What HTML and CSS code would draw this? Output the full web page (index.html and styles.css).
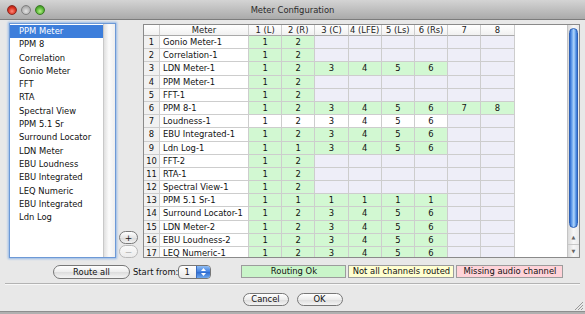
FILE: index.html
```html
<!DOCTYPE html>
<html lang="en">
<head>
    <meta charset="UTF-8">
    <meta name="viewport" content="width=device-width, initial-scale=1.0">
    <title>Meter Configuration</title>
    <link rel="stylesheet" href="styles.css">
</head>
<body>

<div class="window">
    <div class="titlebar">
        <div class="lights">
            <span class="light red"></span>
            <span class="light grey"></span>
            <span class="light green"></span>
        </div>
        <div class="title">Meter Configuration</div>
        <div></div>
    </div>

    <div class="main">
        <div class="list">
            <ul class="items">
                <li class="selected">PPM Meter</li>
                <li>PPM 8</li>
                <li>Correlation</li>
                <li>Gonio Meter</li>
                <li>FFT</li>
                <li>RTA</li>
                <li>Spectral View</li>
                <li>PPM 5.1 Sr</li>
                <li>Surround Locator</li>
                <li>LDN Meter</li>
                <li>EBU Loudness</li>
                <li>EBU Integrated</li>
                <li>LEQ Numeric</li>
                <li>EBU Integrated</li>
                <li>Ldn Log</li>
            </ul>
            <div class="list-track"></div>
        </div>

        <div class="addremove">
            <button class="round">+</button>
            <button class="round" disabled>&minus;</button>
        </div>

        <div class="routing">
            <div class="grid-wrap">
                <div class="row head">
                    <div></div>
                    <div>Meter</div>
                    <div>1 (L)</div>
                    <div>2 (R)</div>
                    <div>3 (C)</div>
                    <div>4 (LFE)</div>
                    <div>5 (Ls)</div>
                    <div>6 (Rs)</div>
                    <div>7</div>
                    <div>8</div>
                </div>
                <div id="rows"></div>
            </div>
            <div class="vscroll">
                <div class="thumb"></div>
                <div class="arrows">
                    <span>&#9650;</span>
                    <span>&#9660;</span>
                </div>
            </div>
        </div>
    </div>

    <div class="controls">
        <button class="pill route">Route all</button>
        <span class="start-label">Start from:</span>
        <div class="popup">
            <span class="value">1</span>
            <span class="popup-arrows">
                <svg width="13" height="12" viewBox="0 0 13 12">
                    <polygon points="4,5 9,5 6.5,2" fill="#fff"/>
                    <polygon points="4,7 9,7 6.5,10" fill="#fff"/>
                </svg>
            </span>
        </div>
        <div class="status">
            <div class="ok">Routing Ok</div>
            <div class="partial">Not all channels routed</div>
            <div class="missing">Missing audio channel</div>
        </div>
    </div>

    <div class="separator"></div>

    <div class="buttons">
        <button class="pill action">Cancel</button>
        <button class="pill action">OK</button>
    </div>

    <svg class="grip" width="9" height="9" viewBox="0 0 9 9">
        <line x1="1" y1="9" x2="9" y2="1" stroke="#999"/>
        <line x1="4" y1="9" x2="9" y2="4" stroke="#999"/>
        <line x1="7" y1="9" x2="9" y2="7" stroke="#999"/>
    </svg>
</div>

<script>
    const meters = [
        ["Gonio Meter-1", [1, 2]],
        ["Correlation-1", [1, 2]],
        ["LDN Meter-1", [1, 2, 3, 4, 5, 6]],
        ["PPM Meter-1", [1, 2]],
        ["FFT-1", [1, 2]],
        ["PPM 8-1", [1, 2, 3, 4, 5, 6, 7, 8]],
        ["Loudness-1", [1, 2, 3, 4, 5, 6], true],
        ["EBU Integrated-1", [1, 2, 3, 4, 5, 6]],
        ["Ldn Log-1", [1, 1, 3, 4, 5, 6]],
        ["FFT-2", [1, 2]],
        ["RTA-1", [1, 2]],
        ["Spectral View-1", [1, 2]],
        ["PPM 5.1 Sr-1", [1, 1, 1, 1, 1, 1]],
        ["Surround Locator-1", [1, 2, 3, 4, 5, 6]],
        ["LDN Meter-2", [1, 2, 3, 4, 5, 6]],
        ["EBU Loudness-2", [1, 2, 3, 4, 5, 6]],
        ["LEQ Numeric-1", [1, 2, 3, 4, 5, 6]]
    ];

    let rows = document.getElementById("rows");

    meters.forEach(function (meter, i) {
        let row = document.createElement("div");
        row.className = "row";

        let num = document.createElement("div");
        num.className = "num";
        num.innerText = i + 1;
        row.appendChild(num);

        let name = document.createElement("div");
        name.className = "name";
        name.innerText = meter[0];
        row.appendChild(name);

        for (let c = 0; c < 8; c++) {
            let cell = document.createElement("div");
            let value = meter[1][c];
            if (value) {
                cell.className = meter[2] ? "plain" : "on";
                cell.innerText = value;
            } else {
                cell.className = "off";
            }
            row.appendChild(cell);
        }
        rows.appendChild(row);
    });
</script>

</body>
</html>
```

FILE: styles.css
```css
body {
    margin: 0;
    width: 585px;
    height: 314px;
    overflow: hidden;
    background: #b0b0b0;
    font-family: "DejaVu Sans", Verdana, sans-serif;
    font-size: 8.4px;
    color: #111;
}
.window {
    position: relative;
    height: 311px;
    background: #e8e8e8;
    border-bottom: 1px solid #8e8e8e;
}
.titlebar {
    display: grid;
    grid-template-columns: 1fr auto 1fr;
    align-items: center;
    height: 19px;
    background: linear-gradient(#d4d4d4, #aaaaaa);
    border-bottom: 1px solid #7c7c7c;
}
.lights {
    display: flex;
    gap: 4px;
    padding-left: 7px;
}
.light {
    width: 10px;
    height: 10px;
    border-radius: 50%;
    box-sizing: border-box;
}
.red {
    background: radial-gradient(circle at 50% 65%, #ff8a7a, #d8301f 55%, #9a1b10);
    border: 1px solid #8a2a20;
}
.grey {
    background: radial-gradient(circle at 50% 65%, #e4e4e4, #b8b8b8 55%, #8e8e8e);
    border: 1px solid #808080;
}
.green {
    background: radial-gradient(circle at 50% 65%, #b6f08a, #58b636 55%, #2f7a18);
    border: 1px solid #3b7a26;
}
.title {
    color: #2a2a2a;
}

.main {
    display: flex;
    align-items: flex-start;
    height: 235px;
    padding: 3px 0 0 9px;
}
.list {
    display: flex;
    width: 107px;
    height: 235px;
    box-sizing: border-box;
    background: #fff;
    border: 1px solid #6d99d6;
    box-shadow: 0 0 2px 1px #94b9e8;
}
.items {
    flex: 1;
    list-style: none;
    margin: 0;
    padding: 1px 0 0;
}
.items li {
    height: 13.3px;
    line-height: 13.3px;
    padding-left: 9px;
    white-space: nowrap;
}
.items li.selected {
    background: #3d7edb;
    color: #fff;
}
.list-track {
    width: 11px;
    background: linear-gradient(to right, #e0e0e0, #fbfbfb 45%, #eeeeee);
    border-left: 1px solid #c9c9c9;
}

.addremove {
    display: flex;
    flex-direction: column;
    justify-content: flex-end;
    gap: 1px;
    width: 19px;
    height: 235px;
    margin-left: 3px;
}
.round {
    width: 19px;
    height: 13px;
    padding: 0;
    border: 1px solid #7a7a7a;
    border-radius: 7px;
    background: linear-gradient(#ffffff, #e6e6e6 50%, #d8d8d8 51%, #f2f2f2);
    font-family: inherit;
    font-size: 9px;
    line-height: 10px;
    color: #222;
}
.round:disabled {
    border-color: #b8b8b8;
    color: #b0b0b0;
    background: linear-gradient(#fafafa, #ececec);
}

.routing {
    display: flex;
    width: 437px;
    height: 234px;
    margin: 1px 0 0 5px;
    box-sizing: border-box;
    background: #fff;
    border: 1px solid #8a8a8a;
}
.grid-wrap {
    flex: 1;
    overflow: hidden;
}
.row {
    display: grid;
    grid-template-columns: 16px 89px repeat(8, 33.2px);
    height: 13.2px;
}
.row > div {
    box-sizing: border-box;
    border-right: 1px solid #cdcdcd;
    border-bottom: 1px solid #cdcdcd;
    line-height: 12.2px;
    text-align: center;
    white-space: nowrap;
    overflow: hidden;
}
.row .num {
    background: #f1f1f1;
}
.row .name {
    text-align: left;
    padding-left: 3px;
    background: #fff;
}
.on {
    background: #d2f8d2;
}
.off {
    background: #eeeef8;
}
.plain {
    background: #fff;
}
.head {
    height: 11px;
}
.head > div {
    line-height: 10px;
    color: #222;
    background: linear-gradient(#ffffff, #f1f1f1);
    border-bottom-color: #a9a9a9;
}

.vscroll {
    display: flex;
    flex-direction: column;
    width: 12px;
    box-sizing: border-box;
    background: linear-gradient(to right, #dadada, #f7f7f7 50%, #e9e9e9);
    border-left: 1px solid #c4c4c4;
}
.thumb {
    flex: 1;
    margin: 3px 1px 0;
    border: 1px solid #2c60b6;
    border-radius: 5px;
    background: linear-gradient(to right, #2e6cd0, #7db2f2 35%, #b2d6fb 55%, #5f9ce8 80%, #3270d0);
}
.arrows {
    display: flex;
    flex-direction: column;
    height: 29px;
    padding-top: 3px;
    box-sizing: border-box;
}
.arrows span {
    flex: 1;
    text-align: center;
    font-size: 5px;
    line-height: 12px;
    color: #666;
}
.arrows span + span {
    border-top: 1px solid #c8c8c8;
}

.controls {
    display: flex;
    align-items: flex-start;
    height: 14px;
    margin-top: 7px;
    padding-left: 53px;
}
.pill {
    height: 14px;
    padding: 0;
    border: 1px solid #777;
    border-radius: 7px;
    background: linear-gradient(#ffffff, #ececec 50%, #dcdcdc 51%, #f4f4f4);
    font-family: inherit;
    font-size: 8.4px;
    color: #111;
}
.route {
    width: 77px;
}
.start-label {
    margin-left: 3px;
    line-height: 14px;
}
.popup {
    display: flex;
    width: 33px;
    height: 14px;
    box-sizing: border-box;
    border: 1px solid #777;
    border-radius: 4px;
    overflow: hidden;
    background: linear-gradient(#ffffff, #e8e8e8);
}
.popup .value {
    flex: 1;
    padding-left: 5px;
    line-height: 12px;
}
.popup-arrows {
    display: flex;
    width: 13px;
    border-left: 1px solid #3a6cc0;
    background: linear-gradient(#8fbdf4, #3d7ee0 50%, #2d6ad0 51%, #6ea8ee);
}
.status {
    display: flex;
    gap: 2px;
    margin-left: 30px;
}
.status div {
    height: 13px;
    box-sizing: border-box;
    border: 1px solid #9c9c9c;
    line-height: 11px;
    text-align: center;
    white-space: nowrap;
}
.ok {
    width: 105px;
    background: #c9f5c9;
}
.partial {
    width: 106px;
    background: #ffffd0;
}
.missing {
    width: 107px;
    background: #ffd3d9;
}

.separator {
    margin: 4px 5px 0;
    border-top: 1px solid #b3b3b3;
    border-bottom: 1px solid #f8f8f8;
}
.buttons {
    display: flex;
    justify-content: center;
    gap: 8px;
    margin-top: 8px;
}
.action {
    width: 46px;
    height: 13px;
    line-height: 11px;
}
.grip {
    position: absolute;
    right: 2px;
    bottom: 1px;
}
```
